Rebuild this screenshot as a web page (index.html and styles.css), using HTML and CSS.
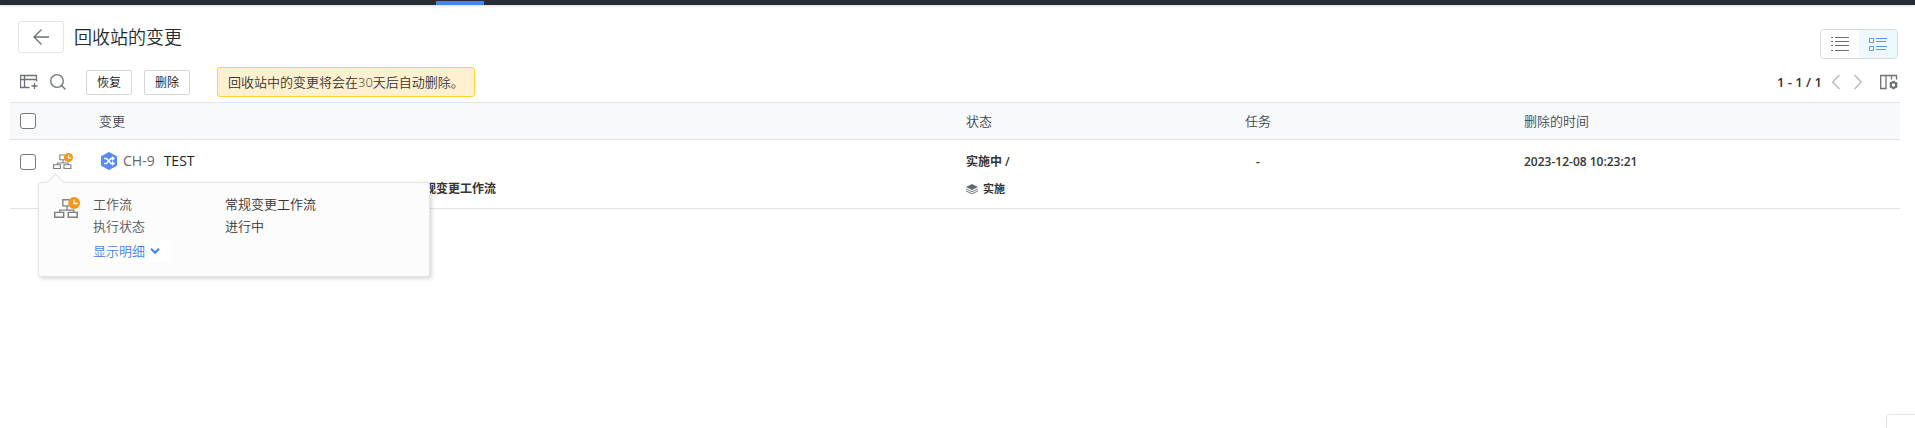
FILE: index.html
```html
<!DOCTYPE html>
<html lang="zh-CN">

<head>
    <meta charset="UTF-8">
    <meta name="viewport" content="width=device-width, initial-scale=1.0">
    <title>回收站的变更</title>

    <link rel="stylesheet" href="styles.css">
</head>

<body>
    <!-- 工作流图标 -->
    <svg class="symbols" aria-hidden="true">
        <symbol id="flow" viewBox="0 0 25 20">
            <path d="M15 2.500H8.500v6H15M12.500 9v3.500M5.500 15v-2.500h13.500V15" fill="none" stroke="#7b8084" stroke-width="1.300" />
            <path d="M.700 14.700h8.600v4.600H.700zM13.700 14.700h8.600v4.600h-8.600z" fill="none" stroke="#7b8084" stroke-width="1.400" />
            <circle cx="19.300" cy="5.700" r="5.700" fill="#f7981d" stroke="none" />
            <path d="M19.300 2.500v3.700h3.300" fill="none" stroke="#fff" stroke-width="1.300" />
        </symbol>
    </svg>

    <div class="topbar">
        <span class="topbar-active"></span>
    </div>

    <div class="header">
        <div class="header-left">
            <button type="button" class="back" aria-label="返回">
                <svg width="16" height="16" viewBox="0 0 16 16"><path d="M16 8H1M8.500.500L1 8l7.500 7.500" /></svg>
            </button>
            <h1>回收站的变更</h1>
        </div>
        <div class="view-switch">
            <button type="button" aria-label="列表">
                <svg width="18" height="16" viewBox="0 0 18 16"><path d="M0 1.500h2M4 1.500h14M0 5.500h2M4 5.500h14M0 9.500h2M4 9.500h14M0 14.500h2M4 14.500h14" /></svg>
            </button>
            <button type="button" class="active" aria-label="详细列表">
                <svg width="18" height="16" viewBox="0 0 18 16"><path d="M.500 2.500h4v4h-4zM.500 10.500h4v4h-4zM7 2.500h11M7 5.500h10M7 10.500h11M7 13.500h10" /></svg>
            </button>
        </div>
    </div>

    <div class="toolbar">
        <button type="button" class="icon-btn" aria-label="添加列">
            <svg width="18" height="16" viewBox="0 0 18 16"><path d="M9.500 13.500H.500V1.500h16v6M.500 5.500h16M4.500 1.500v12M14.500 9v6M11.500 12h6" /></svg>
        </button>
        <button type="button" class="icon-btn search" aria-label="搜索">
            <svg width="16" height="16" viewBox="0 0 16 16"><circle cx="7" cy="7" r="6.300" /><path d="M11.500 11.500l4 4" /></svg>
        </button>
        <button type="button" class="btn">恢复</button>
        <button type="button" class="btn">删除</button>
        <p class="notice">回收站中的变更将会在30天后自动删除。</p>
        <div class="pager">
            <span class="pager-text">1 - 1 / 1</span>
            <button type="button" class="icon-btn prev" aria-label="上一页">
                <svg width="8" height="16" viewBox="0 0 8 16"><path d="M7.500 1L.700 8l6.800 7" /></svg>
            </button>
            <button type="button" class="icon-btn next" aria-label="下一页">
                <svg width="8" height="16" viewBox="0 0 8 16"><path d="M.500 1l6.800 7-6.800 7" /></svg>
            </button>
            <button type="button" class="icon-btn setting" aria-label="列设置">
                <svg width="18" height="16" viewBox="0 0 18 16">
                    <path d="M.700 1.500h16.300M.700 1v13.500h5.300V1.500M11.500 1.500v4M16.500 1.500v4" />
                    <circle cx="13.500" cy="11" r="2.700" stroke-width="2" />
                    <path d="M13.500 6.800v1.500M13.500 13.700v1.500M9.800 8.900l1.300.800M15.900 12.300l1.300.800M9.800 13.100l1.300-.800M15.900 9.700l1.300-.800" stroke-width="2" />
                </svg>
            </button>
        </div>
    </div>

    <table class="list">
        <thead>
            <tr>
                <th class="col-check"><input type="checkbox" aria-label="全选"></th>
                <th class="col-flow"></th>
                <th>变更</th>
                <th class="col-status">状态</th>
                <th class="col-task">任务</th>
                <th class="col-time">删除的时间</th>
            </tr>
        </thead>
        <tbody>
            <tr>
                <td class="col-check"><input type="checkbox" aria-label="选择 CH-9"></td>
                <td class="col-flow">
                    <div class="flow">
                        <button type="button" class="icon-btn flow-btn" aria-label="工作流">
                            <svg width="20" height="18"><use href="#flow" /></svg>
                        </button>
                        <div class="popover">
                            <svg class="popover-icon" width="26" height="21"><use href="#flow" /></svg>
                            <div class="popover-body">
                                <dl>
                                    <dt>工作流</dt>
                                    <dd>常规变更工作流</dd>
                                    <dt>执行状态</dt>
                                    <dd>进行中</dd>
                                </dl>
                                <a href="#" class="more">显示明细
                                    <svg width="10" height="6" viewBox="0 0 10 6"><path d="M1 .800l4 4 4-4" /></svg>
                                </a>
                            </div>
                        </div>
                    </div>
                </td>
                <td>
                    <div class="change">
                        <svg width="16" height="18" viewBox="0 0 16 18">
                            <path d="M8 .500l7.500 4v9L8 17.500l-7.500-4v-9z" fill="#568af5" stroke="#568af5" stroke-linejoin="round" />
                            <path d="M3 6.500h2.500l4.500 5h2.500M3 11.500h2.500l4.500-5h2.500M11 4.800l2 1.700-2 1.700M11 9.800l2 1.700-2 1.700" fill="none" stroke="#fff" stroke-width="1.300" />
                        </svg>
                        <span class="change-no">CH-9</span>
                        <a href="#">TEST</a>
                    </div>
                    <div class="change-flow">常规变更工作流</div>
                </td>
                <td class="col-status">
                    <div class="line">实施中 /</div>
                    <div class="stage">
                        <svg width="12" height="10" viewBox="0 0 12 10">
                            <path d="M6 0l6 3-6 3-6-3z" fill="#62696f" />
                            <path d="M0 5l6 2.800L12 5M0 7l6 2.800L12 7" fill="none" stroke="#7b8186" />
                        </svg>
                        实施
                    </div>
                </td>
                <td class="col-task"><div class="line count">-</div></td>
                <td class="col-time"><div class="line">2023-12-08 10:23:21</div></td>
            </tr>
        </tbody>
    </table>

    <button type="button" class="float-btn" aria-label="展开">
        <svg width="12" height="12" viewBox="0 0 12 12"><path d="M1.500 0v6l4 4 5-4V0" /></svg>
    </button>
</body>

</html>
```
FILE: styles.css
```css
* {
    margin: 0;
    padding: 0;
    box-sizing: border-box;
}

body {
    min-height: 100vh;
    font-family: "Open Sans", "Noto Sans CJK SC", sans-serif;
    font-size: 13px;
    line-height: 20px;
    color: #333;
    background-color: #fff;
}

a {
    text-decoration: none;
}

button {
    font-family: inherit;
    background-color: #fff;
    cursor: pointer;
}

svg {
    display: block;
}

.symbols {
    position: absolute;
    width: 0;
    height: 0;
}

/* 顶部 */
.topbar {
    height: 5px;
    padding: 1px 0 0 436px;
    background-color: #262d35;
    box-shadow: 0 1px 3px rgba(0, 0, 0, 0.15);
}

.topbar-active {
    display: block;
    width: 48px;
    height: 4px;
    background-color: #4384f5;
}

.header {
    display: flex;
    justify-content: space-between;
    align-items: flex-end;
    padding: 16px 17px 0 18px;
}

.header-left {
    display: flex;
    align-items: center;
    gap: 10px;
    padding-bottom: 6px;
}

.back {
    display: flex;
    align-items: center;
    justify-content: center;
    width: 46px;
    height: 32px;
    border: 1px solid #e1e3e5;
    border-radius: 3px;
}

.back svg,
.icon-btn svg {
    fill: none;
    stroke: #6b7177;
    stroke-width: 1.3;
}

h1 {
    font-size: 18px;
    font-weight: 350;
    line-height: 32px;
    color: #222b33;
}

.view-switch {
    display: flex;
    height: 30px;
    border: 1px solid #d5d7d9;
    border-radius: 4px;
    overflow: hidden;
}

.view-switch button {
    display: flex;
    align-items: center;
    justify-content: center;
    width: 38px;
    border: 0;
}

.view-switch svg {
    fill: none;
    stroke: #707070;
}

.view-switch .active {
    background-color: #eef8ff;
}

.view-switch .active svg {
    stroke: #5b93ee;
}

/* 工具栏 */
.toolbar {
    display: flex;
    align-items: center;
    margin-top: 8px;
    padding: 0 17px 0 20px;
}

.icon-btn {
    border: 0;
    background: none;
}

.search {
    margin: 0 20px 0 12px;
}

.btn {
    width: 46px;
    height: 25px;
    margin-right: 12px;
    border: 1px solid #d5d7d9;
    border-radius: 2px;
    font-size: 12px;
    font-weight: 350;
    color: #111;
}

.notice {
    height: 30px;
    margin-left: 15px;
    padding: 0 10px;
    border: 1px solid #fbd52b;
    border-radius: 3px;
    background-color: #fff0cf;
    font-weight: 350;
    line-height: 28px;
}

.pager {
    display: flex;
    align-items: center;
    margin-left: auto;
}

.pager-text {
    font-weight: 600;
}

.prev {
    margin-left: 10px;
}

.next {
    margin: 0 18px 0 14px;
}

.prev svg,
.next svg {
    stroke: #b5b7b9;
}

/* 列表 */
.list {
    width: calc(100% - 25px);
    margin: 5px 15px 0 10px;
    border-spacing: 0;
    table-layout: fixed;
}

.list th {
    height: 38px;
    border-top: 1px solid #e1e3e5;
    border-bottom: 1px solid #e1e3e5;
    background-color: #f8f9fb;
    font-weight: 350;
    text-align: left;
    color: #3f454b;
}

.list td {
    height: 69px;
    padding-top: 12px;
    border-bottom: 1px solid #e1e3e5;
    vertical-align: top;
}

.list .col-check {
    width: 43px;
    padding-left: 10px;
}

.list .col-flow {
    width: 46px;
}

.col-status,
.col-task {
    width: 279px;
}

.col-time {
    width: 376px;
}

input[type="checkbox"] {
    display: block;
    appearance: none;
    width: 16px;
    height: 16px;
    border: 1px solid #767676;
    border-radius: 3px;
    background-color: #fff;
}

.list td input {
    margin-top: 2px;
}

.flow {
    position: relative;
}

.flow-btn {
    display: block;
}

.change {
    display: flex;
    align-items: center;
    height: 18px;
    padding-left: 2px;
    font-size: 14px;
}

.change-no {
    margin: 0 9px 0 6px;
    color: #666;
}

.change a {
    color: #222;
}

.change-flow {
    margin-top: 9px;
    padding-left: 313px;
    font-size: 12px;
    font-weight: 600;
}

.line {
    font-size: 12px;
    font-weight: 600;
}

.count {
    width: 26px;
    text-align: center;
}

.stage {
    display: flex;
    align-items: center;
    gap: 5px;
    margin-top: 7px;
    font-size: 11px;
    font-weight: 600;
}

/* 弹出层 */
.popover {
    display: flex;
    position: absolute;
    top: 30px;
    left: -15px;
    width: 392px;
    height: 95px;
    padding: 10px 15px;
    border: 1px solid #e1e3e5;
    border-radius: 3px;
    background-color: #fcfcfc;
    box-shadow: 2px 2px 4px rgba(0, 0, 0, 0.15);
    z-index: 10;
}

.popover::before {
    content: "";
    position: absolute;
    top: -7px;
    left: 10px;
    width: 12px;
    height: 12px;
    border: 1px solid #e1e3e5;
    border-right: 0;
    border-bottom: 0;
    background-color: #fcfcfc;
    transform: rotate(45deg);
}

.popover-icon {
    margin: 4px 13px 0 0;
}

.popover dl {
    display: grid;
    grid-template-columns: 132px auto;
    font-weight: 350;
    line-height: 22px;
}

.popover dt {
    color: #555;
}

.more {
    display: inline-flex;
    align-items: center;
    gap: 5px;
    width: 79px;
    height: 22px;
    margin-top: 3px;
    background-color: #fff;
    font-weight: 350;
    color: #3f7fee;
}

.more svg {
    fill: none;
    stroke: #3f7fee;
    stroke-width: 2;
}

.float-btn {
    position: fixed;
    right: -11px;
    bottom: -26px;
    width: 40px;
    height: 40px;
    border: 1px solid #e1e3e5;
    border-radius: 4px;
}

.float-btn svg {
    margin: 0 auto;
    fill: none;
    stroke: #6b7177;
}
```
